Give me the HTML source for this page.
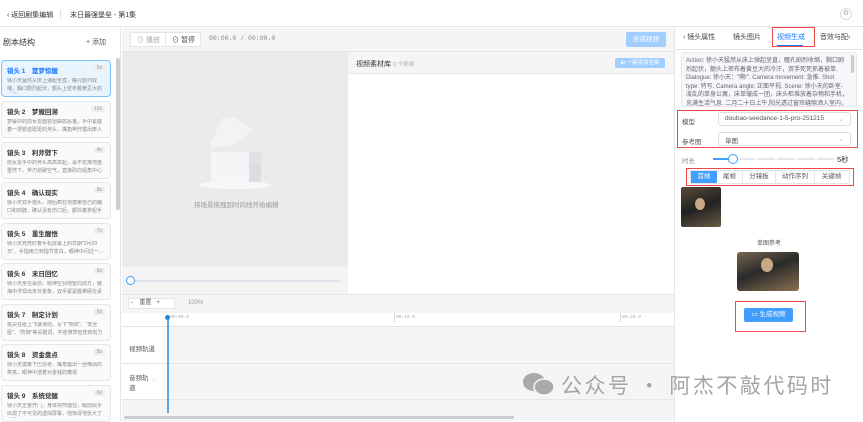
<!DOCTYPE html><html><head><meta charset="utf-8"><style>
*{box-sizing:border-box;margin:0;padding:0}
body{width:863px;height:421px;overflow:hidden;position:relative;background:#fff;font-family:"Liberation Sans","Noto Sans CJK SC",sans-serif;color:#333;font-size:7px}
.a{position:absolute}
.card{position:absolute;left:1px;width:110px;height:37px;border:1px solid #e6e6e6;border-radius:4px;background:#fafafa;padding:4px 5px}
.card b{font-size:6.5px;color:#333;display:block}
.card .d{position:absolute;right:5px;top:4px;background:#eee;color:#999;font-size:5px;padding:0 3px;border-radius:2px}
.card p{font-size:5px;color:#888;line-height:7.5px;margin-top:3px;height:15px;overflow:hidden}
.red{position:absolute;border:1.5px solid #e84a4a}
.sel{position:absolute;left:718px;width:133px;height:14px;border:1px solid #ddd;border-radius:3px;font-size:6.5px;color:#555;padding:2px 6px}
</style></head><body>
<div class="a" style="left:0;top:0;width:863px;height:27px;border-bottom:1px solid #e5e5e5"></div>
<div class="a" style="left:7px;top:10px;font-size:7px">‹ 返回剧集编辑</div>
<div class="a" style="left:60px;top:10px;width:1px;height:9px;background:#ddd"></div>
<div class="a" style="left:70px;top:10px;font-size:7px">末日最强堡垒 - 第1集</div>
<div class="a" style="left:840px;top:8px;width:12px;height:12px;border:1px solid #ddd;border-radius:50%;color:#aaa;font-size:7px;text-align:center;line-height:10px">⚙</div>
<!-- left -->
<div class="a" style="left:0;top:28px;width:121px;height:393px;border-right:1px solid #e5e5e5"></div>
<div class="a" style="left:3px;top:37px;font-size:8px;color:#333">剧本结构</div>
<div class="a" style="left:86px;top:37px;font-size:7px;color:#555">+ 添加</div>
<div class="a" style="left:116px;top:58px;width:4px;height:152px;background:#ccc;border-radius:2px"></div>
<div class="card" style="top:60px;background:#e8f4fe;border-color:#7ec0f8"><b style="color:#1677ff">镜头 1　噩梦惊醒</b><span class="d">5s</span><p>徐小天猛然从床上弹起坐直，瞳孔剧烈收缩，胸口剧烈起伏，额头上密布着黄豆大的冷汗…</p></div>
<div class="card" style="top:101px"><b>镜头 2　梦魇回溯</b><span class="d">10s</span><p>梦魇中的前女友面容扭曲如恶鬼，手中紧握着一把锈迹斑斑的斧头，嘴角咧开露出瘆人的…</p></div>
<div class="card" style="top:142px"><b>镜头 3　利斧劈下</b><span class="d">4s</span><p>前女友手中的斧头高高举起，毫不犹豫地重重劈下，斧刃划破空气，直接砍向视角中心（…</p></div>
<div class="card" style="top:182px"><b>镜头 4　确认现实</b><span class="d">8s</span><p>徐小天双手抱头，随后疯狂地摸索自己的胸口和劲脖，确认没有伤口后，颤抖着拿起手机…</p></div>
<div class="card" style="top:223px"><b>镜头 5　重生醒悟</b><span class="d">7s</span><p>徐小天死死盯着手机屏幕上的日期"2月20日"，手指用力到指节发白，眼神中闪过一…</p></div>
<div class="card" style="top:263px"><b>镜头 6　末日回忆</b><span class="d">9s</span><p>徐小天坐在桌前，眼神空洞地望向前方，脑海中浮现出末日景象，双手紧紧握拳砸在桌面上</p></div>
<div class="card" style="top:304px"><b>镜头 7　制定计划</b><span class="d">6s</span><p>笔尖在纸上飞速滑动，写下"物资"、"安全屋"、"防御"等关键词，字迹潦草但苍劲有力</p></div>
<div class="card" style="top:344px"><b>镜头 8　资金盘点</b><span class="d">8s</span><p>徐小天摸着下巴思考，嘴角露出一丝嘲讽的笑意，眼神中透着对金钱的蔑视</p></div>
<div class="card" style="top:385px"><b>镜头 9　系统觉醒</b><span class="d">6s</span><p>徐小天正要开门，身体突然僵住，眼前似乎出现了不可见的虚拟屏幕，他惊讶地张大了嘴巴</p></div>
<!-- toolbar -->
<div class="a" style="left:122px;top:28px;width:552px;height:24px;background:#f5f5f5;border-bottom:1px solid #e5e5e5"></div>
<div class="a" style="left:130px;top:32px;width:71px;height:15px;border:1px solid #e5e5e5;background:#fff;border-radius:2px"></div>
<div class="a" style="left:165px;top:32px;width:1px;height:15px;background:#e5e5e5"></div>
<div class="a" style="left:137px;top:35px;font-size:7px;color:#aaa">⊙ 播放</div>
<div class="a" style="left:172px;top:35px;font-size:7px;color:#444">⊙ 暂停</div>
<div class="a" style="left:209px;top:35px;font-size:6.5px;color:#888;font-family:'Liberation Mono',monospace">00:00.0 / 00:00.0</div>
<div class="a" style="left:626px;top:32px;width:40px;height:15px;background:#a0cfff;border-radius:2px;color:#fff;font-size:6.5px;text-align:center;line-height:15px">合成视频</div>
<!-- canvas -->
<div class="a" style="left:122px;top:52px;width:226px;height:215px;background:#ebebeb"></div>
<div class="a" style="left:122px;top:267px;width:226px;height:27px;background:#f4f4f4"></div>
<div class="a" style="left:130px;top:280px;width:210px;height:2px;background:#dde3ea"></div>
<div class="a" style="left:126px;top:276px;width:9px;height:9px;border:1.5px solid #409eff;border-radius:50%;background:#fff"></div>
<svg class="a" style="left:195px;top:115px" width="80" height="80" viewBox="0 0 80 80"><ellipse cx="40" cy="70" rx="36" ry="4" fill="#f7f7f9"/><polygon points="14,33 27,3 40,3 58,15 40,30" fill="#f3f3f5"/><polygon points="16,37 54,37 54,67 16,67" fill="#f5f5f7"/><polygon points="54,37 68,37 66,48 54,48" fill="#e2e2e6"/><polygon points="54,48 66,48 66,67 54,67" fill="#dcdce2"/></svg>
<div class="a" style="left:194px;top:199px;font-size:6.5px;color:#999">将场景拖拽到时间线开始编辑</div>
<!-- library -->
<div class="a" style="left:348px;top:52px;width:326px;height:22px;background:#f5f5f5;border-bottom:1px solid #e5e5e5"></div>
<div class="a" style="left:356px;top:59px;font-size:7px;color:#333">视频素材库 <span style="font-size:5.5px;color:#aaa">0 个视频</span></div>
<div class="a" style="left:615px;top:58px;width:50px;height:10px;background:#a0cfff;border-radius:2px;color:#fff;font-size:5.5px;text-align:center;line-height:10px">⊞ 一键添加全部</div>
<!-- timeline -->
<div class="a" style="left:122px;top:294px;width:552px;height:127px;background:#f5f5f5;border-top:1px solid #e5e5e5"></div>
<div class="a" style="left:128px;top:298px;width:47px;height:11px;border:1px solid #e5e5e5;background:#fff;font-size:6px;color:#555;line-height:9px">&nbsp;-&nbsp;&nbsp;&nbsp;&nbsp;重置&nbsp;&nbsp;&nbsp;+</div>
<div class="a" style="left:188px;top:300px;font-size:6px;color:#999">100%</div>
<div class="a" style="left:122px;top:313px;width:552px;height:14px;background:#fff;border-bottom:1px solid #e5e5e5"></div>
<div class="a" style="left:170px;top:315px;font-size:4.5px;color:#aaa;font-family:'Liberation Mono',monospace">00:00.0</div>
<div class="a" style="left:394px;top:313px;width:1px;height:9px;background:#ddd"></div><div class="a" style="left:396px;top:315px;font-size:4.5px;color:#aaa;font-family:'Liberation Mono',monospace">00:10.0</div>
<div class="a" style="left:620px;top:313px;width:1px;height:9px;background:#ddd"></div><div class="a" style="left:622px;top:315px;font-size:4.5px;color:#aaa;font-family:'Liberation Mono',monospace">00:20.0</div>
<div class="a" style="left:122px;top:327px;width:45px;height:72px;background:#fff"></div>
<div class="a" style="left:122px;top:363px;width:552px;height:1px;background:#e5e5e5"></div>
<div class="a" style="left:122px;top:399px;width:552px;height:1px;background:#e5e5e5"></div>
<div class="a" style="left:129px;top:343px;font-size:6.5px;color:#555">视频轨道</div>
<div class="a" style="left:129px;top:374px;font-size:6.5px;color:#555;line-height:10px">音频轨<br>道</div>
<div class="a" style="left:152px;top:378px;font-size:6px;color:#aaa">∩</div>
<div class="a" style="left:167px;top:317px;width:1.5px;height:96px;background:#5aa9e6"></div>
<div class="a" style="left:165px;top:315px;width:5px;height:5px;border-radius:50%;background:#1e88e5"></div>
<div class="a" style="left:124px;top:416px;width:390px;height:3px;background:#ccc;border-radius:2px"></div>
<!-- right panel -->
<div class="a" style="left:674px;top:28px;width:1px;height:393px;background:#e5e5e5"></div>
<div class="a" style="left:675px;top:49px;width:188px;height:1px;background:#e5e5e5"></div>
<div class="a" style="left:683px;top:32px;font-size:7px;color:#444">‹ 镜头属性</div>
<div class="a" style="left:733px;top:32px;font-size:7px;color:#444">镜头图片</div>
<div class="a" style="left:777px;top:32px;font-size:7px;color:#1677ff">视频生成</div>
<div class="a" style="left:777px;top:45px;width:26px;height:1.5px;background:#1677ff"></div>
<div class="a" style="left:820px;top:32px;font-size:7px;color:#444">音效与配›</div>
<div class="red" style="left:772px;top:27px;width:43px;height:20px"></div>
<div class="a" style="left:681px;top:52px;width:176px;height:55px;background:#f5f7fa;border:1px solid #e8e8e8;border-radius:3px;padding:4px 8px 0 4px;font-size:6px;line-height:8.6px;color:#666;overflow:hidden">Action: 徐小天猛然从床上弹起坐直，瞳孔剧烈收缩，胸口剧烈起伏，额头上密布着黄豆大的冷汗，双手死死抓着被单. Dialogue: 徐小天："啊!". Camera movement: 急推. Shot type: 特写. Camera angle: 正面平视. Scene: 徐小天的卧室-凌乱的单身公寓，床单皱成一团，床头柜堆放着杂物和手机，充满生活气息. 二月二十日上午,阳光透过窗帘缝隙洒入室内，空气中漂浮着细微尘</div>
<div class="a" style="left:851px;top:55px;width:3px;height:18px;background:#ccc;border-radius:2px"></div>
<div class="red" style="left:677px;top:110px;width:181px;height:38px"></div>
<div class="a" style="left:682px;top:116px;font-size:6.5px;color:#555">模型</div>
<div class="sel" style="top:112px">doubao-seedance-1-5-pro-251215<span style="float:right;color:#bbb">⌄</span></div>
<div class="a" style="left:682px;top:136px;font-size:6.5px;color:#555">参考图</div>
<div class="sel" style="top:132px">单图<span style="float:right;color:#bbb">⌄</span></div>
<div class="a" style="left:682px;top:155px;font-size:6.5px;color:#888">时长</div>
<div class="a" style="left:713px;top:158px;width:20px;height:2px;background:#409eff"></div>
<div class="a" style="left:737px;top:158px;width:97px;height:2px;background:repeating-linear-gradient(90deg,#e4e7ed 0 18px,transparent 18px 20px)"></div>
<div class="a" style="left:728px;top:154px;width:10px;height:10px;border:1.5px solid #409eff;border-radius:50%;background:#fff"></div>
<div class="a" style="left:837px;top:154px;font-size:7.5px;color:#333">5秒</div>
<div class="red" style="left:686px;top:168px;width:168px;height:18px"></div>
<div class="a" style="left:690px;top:170px;width:160px;height:14px;border:1px solid #e5e5e5;font-size:6.5px;color:#555;display:flex">
<span style="width:26px;background:#409eff;color:#fff;text-align:center;line-height:12px">首帧</span><span style="width:26px;text-align:center;line-height:12px;border-right:1px solid #e5e5e5">尾帧</span><span style="width:33px;text-align:center;line-height:12px;border-right:1px solid #e5e5e5">分镜板</span><span style="width:39px;text-align:center;line-height:12px;border-right:1px solid #e5e5e5">动作序列</span><span style="width:33px;text-align:center;line-height:12px">关键帧</span></div>
<div class="a" style="left:681px;top:187px;width:40px;height:40px;background:linear-gradient(160deg,#5a4a3a,#222 50%,#6b5a42);border-radius:2px"></div>
<div class="a" style="left:695px;top:198px;width:10px;height:12px;background:#c9a886;border-radius:50%"></div>
<div class="a" style="left:757px;top:238px;font-size:6px;color:#555">单图参考</div>
<div class="a" style="left:737px;top:252px;width:62px;height:39px;background:linear-gradient(160deg,#7a6550,#2a2a2a 45%,#8a7050);border-radius:3px"></div>
<div class="a" style="left:761px;top:258px;width:12px;height:14px;background:#c9a886;border-radius:50%"></div>
<div class="red" style="left:735px;top:301px;width:71px;height:31px"></div>
<div class="a" style="left:744px;top:308px;width:49px;height:14px;background:#409eff;border-radius:2px;color:#fff;font-size:6.5px;text-align:center;line-height:14px">▭ 生成视频</div>
<!-- watermark -->
<svg class="a" style="left:522px;top:372px" width="34" height="24" viewBox="0 0 34 24"><ellipse cx="12" cy="10" rx="11" ry="9" fill="#aaa"/><ellipse cx="22" cy="15" rx="10" ry="8" fill="#aaa" stroke="#f5f5f5" stroke-width="1.5"/></svg>
<div class="a" style="left:561px;top:370px;font-size:21px;color:#a4a4a4;letter-spacing:2.5px;font-family:'Noto Sans CJK SC',sans-serif">公众号 · 阿杰不敲代码时</div>
</body></html>
